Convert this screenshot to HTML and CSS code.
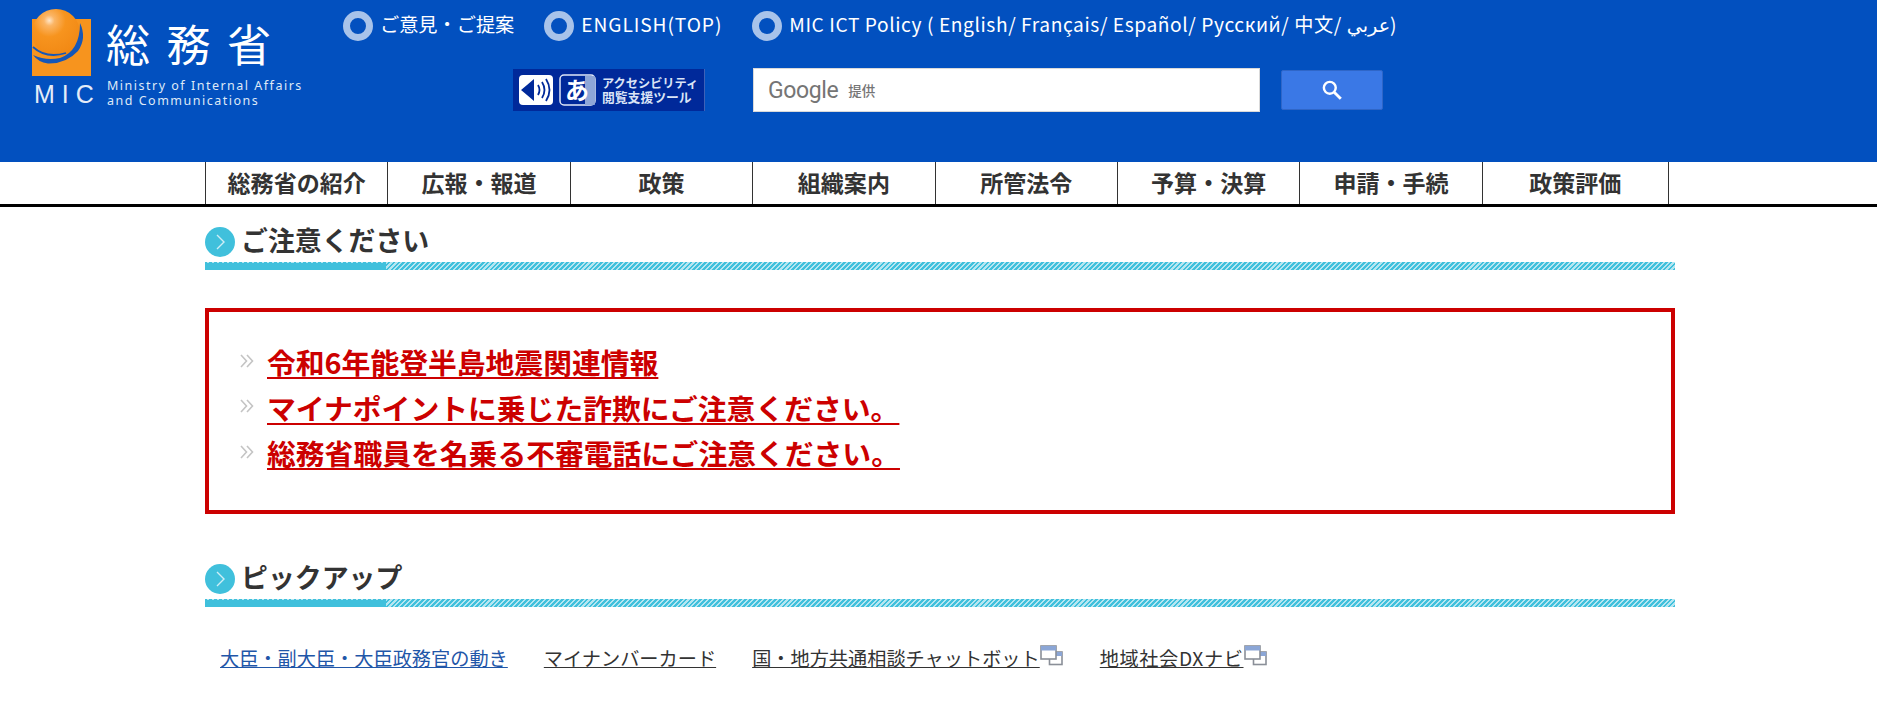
FILE: index.html
```html
<!DOCTYPE html>
<html lang="ja">
<head>
<meta charset="utf-8">
<title>総務省</title>
<link rel="stylesheet" href="styles.css">
</head>
<body>
<svg class="defs" width="0" height="0" aria-hidden="true">
  <defs>
    <radialGradient id="ball" cx="0.36" cy="0.24" r="0.85">
      <stop offset="0" stop-color="#ffe6c8"/>
      <stop offset="0.13" stop-color="#fbb565"/>
      <stop offset="0.4" stop-color="#f7941e"/>
      <stop offset="1" stop-color="#f08612"/>
    </radialGradient>
    <symbol id="ring" viewBox="0 0 30 30">
      <circle cx="15" cy="15" r="11.5" fill="none" stroke="#a8c3ea" stroke-width="7"/>
    </symbol>
    <symbol id="chev" viewBox="0 0 14 14">
      <path d="M1 1l5.5 6L1 13M7 1l5.5 6L7 13" fill="none" stroke="#c4c4c4" stroke-width="1.6"/>
    </symbol>
    <symbol id="win" viewBox="0 0 23 21">
      <rect x="9.5" y="7" width="12.5" height="12.5" fill="#fff" stroke="#8a8f98" stroke-width="1.6"/>
      <rect x="9.5" y="7" width="12.5" height="4" fill="#8ba6d6"/>
      <rect x="1" y="1" width="15" height="13" fill="#fff" stroke="#8a8f98" stroke-width="1.6"/>
      <rect x="1" y="1" width="15" height="4.5" fill="#8ba6d6"/>
    </symbol>
    <symbol id="arrow" viewBox="0 0 30 30">
      <circle cx="15" cy="15" r="15" fill="#40c0dc"/>
      <path d="M12 8l7 7-7 7" fill="none" stroke="#cfeef6" stroke-width="1.4"/>
    </symbol>
  </defs>
</svg>

<header class="masthead">
  <a class="logo" href="#">
    <svg width="343" height="120" viewBox="0 0 343 120">
      <rect x="32" y="19" width="59" height="57" fill="#f7941e"/>
      <circle cx="56" cy="33" r="24" fill="url(#ball)"/>
      <path d="M80 23Q87 38 78 51Q66 64 48 63.500Q38 62 33 55Q46 61 60 58Q80 51 80 23z" fill="#1557b8"/>
      <path d="M33 47Q46 59 66 53" fill="none" stroke="#1557b8" stroke-width="1.800"/>
      <text class="logo-kanji" x="106" y="62">総務省</text>
      <text class="logo-mic" x="34" y="103">MIC</text>
      <text class="logo-en" x="107" y="90">Ministry of Internal Affairs</text>
      <text class="logo-en" x="107" y="105">and Communications</text>
    </svg>
  </a>
  <div class="head-main">
    <ul class="toplinks">
      <li><svg class="ring"><use href="#ring"/></svg><a href="#">ご意見・ご提案</a></li>
      <li><svg class="ring"><use href="#ring"/></svg><a class="en-a" href="#">ENGLISH(TOP)</a></li>
      <li><svg class="ring"><use href="#ring"/></svg><a class="en-b" href="#">MIC ICT Policy ( English/ Français/ Español/ Русский/ 中文/ عربي)</a></li>
    </ul>
    <div class="tools">
      <a class="a11y" href="#">
        <svg width="192" height="42" viewBox="0 0 192 42">
          <rect width="192" height="42" fill="#00299a"/>
          <rect x="191" width="1" height="42" fill="#3e62b8"/>
          <rect x="6" y="6" width="34" height="30" rx="4" fill="#fff"/>
          <path d="M8 21L14 16L21 10V32L14 26z" fill="#00299a"/>
          <path d="M25 16q3 5 0 10M29 13q5 8 0 16M33 10q7 11 0 22" fill="none" stroke="#00299a" stroke-width="1.800"/>
          <rect x="47" y="6" width="35" height="30" rx="4" fill="#00299a" stroke="#dfe7f7" stroke-width="1.500"/>
          <path d="M72 7h9a1 1 0 0 1 1 1v27a1 1 0 0 1-1 1h-9z" fill="#8ea6d8"/>
          <text class="a11y-kana" x="52" y="30">あ</text>
          <text class="a11y-txt a11y-one" x="89" y="19">アクセシビリティ</text>
          <text class="a11y-txt a11y-two" x="89" y="33">閲覧支援ツール</text>
        </svg>
      </a>
      <form class="search">
        <div class="search-box"><span class="g-brand">Google</span><span class="g-note">提供</span></div>
        <button class="search-btn" type="button" aria-label="検索">
          <svg width="22" height="22" viewBox="0 0 20 20"><circle cx="8" cy="8" r="5.400" fill="none" stroke="#fff" stroke-width="2.200"/><path d="M12 12l6 6" stroke="#fff" stroke-width="2.600"/></svg>
        </button>
      </form>
    </div>
  </div>
</header>

<nav class="gnav">
  <ul>
    <li><a href="#">総務省の紹介</a></li>
    <li><a href="#">広報・報道</a></li>
    <li><a href="#">政策</a></li>
    <li><a href="#">組織案内</a></li>
    <li><a href="#">所管法令</a></li>
    <li><a href="#">予算・決算</a></li>
    <li><a href="#">申請・手続</a></li>
    <li><a href="#">政策評価</a></li>
  </ul>
</nav>

<main class="content">
  <section class="notice">
    <h2 class="sec-title"><svg class="arrow"><use href="#arrow"/></svg><span>ご注意ください</span></h2>
    <div class="sec-bar"></div>
    <ul class="alert">
      <li><svg class="chev"><use href="#chev"/></svg><a href="#">令和6年能登半島地震関連情報</a></li>
      <li><svg class="chev"><use href="#chev"/></svg><a href="#">マイナポイントに乗じた詐欺にご注意ください。</a></li>
      <li><svg class="chev"><use href="#chev"/></svg><a href="#">総務省職員を名乗る不審電話にご注意ください。</a></li>
    </ul>
  </section>
  <section class="pickup">
    <h2 class="sec-title"><svg class="arrow"><use href="#arrow"/></svg><span>ピックアップ</span></h2>
    <div class="sec-bar"></div>
    <ul class="pick-links">
      <li><a class="blue" href="#">大臣・副大臣・大臣政務官の動き</a></li>
      <li><a href="#">マイナンバーカード</a></li>
      <li><a href="#">国・地方共通相談チャットボット</a><svg class="win"><use href="#win"/></svg></li>
      <li><a class="dx" href="#">地域社会DXナビ</a><svg class="win"><use href="#win"/></svg></li>
    </ul>
  </section>
</main>
</body>
</html>
```
FILE: styles.css
```css
* { box-sizing: border-box; }
html, body { margin: 0; padding: 0; height: 708px; overflow: hidden; background: #fff; }
body { font-family: "Noto Sans CJK JP", "Noto Sans", "DejaVu Sans", sans-serif; font-size: 19.2px; color: #333; }
ul { list-style: none; margin: 0; padding: 0; }
.defs { position: absolute; }
svg { display: block; }

.masthead { display: flex; height: 162px; background: #0250bf; color: #fff; }
.logo { flex: none; width: 343px; height: 120px; }
.logo-kanji { font-size: 44px; fill: #fff; letter-spacing: 16.500px; font-weight: 400; }
.logo-mic { font-size: 25px; fill: #e4ecf8; letter-spacing: 7px; font-family: "Liberation Sans", sans-serif; }
.logo-en { font-size: 12.500px; fill: #dfe9f7; letter-spacing: 1.500px; font-family: "Noto Sans", sans-serif; }

.head-main { flex: 1; padding-top: 11px; }
.toplinks { display: flex; height: 30px; align-items: center; }
.toplinks li { display: flex; align-items: center; margin-right: 30px; }
.toplinks .ring { width: 30px; height: 30px; margin-right: 7px; flex: none; }
.toplinks a { color: #fff; text-decoration: none; white-space: nowrap; font-size: 19.2px; line-height: 30px; padding-bottom: 4px; }
.toplinks a.en-a { letter-spacing: 0.900px; }
.toplinks a.en-b { letter-spacing: 0.570px; }

.tools { display: flex; align-items: center; margin-top: 27px; padding-left: 170px; }
.a11y { flex: none; width: 192px; height: 42px; margin-right: 48px; }
.a11y-kana { font-size: 24px; fill: #fff; font-weight: 700; }
.a11y-txt { fill: #dbe4f6; font-weight: 700; }
.a11y-one { font-size: 12.200px; }
.a11y-two { font-size: 12.800px; }

.search { display: flex; align-items: center; }
.search-box { display: flex; align-items: center; width: 507px; height: 44px; padding-left: 14px; background: #fff; border: 1px solid #d9d9d9; }
.g-brand { font-family: "Roboto", sans-serif; font-size: 23px; color: #757575; letter-spacing: -0.400px; }
.g-note { font-size: 13.500px; color: #757575; margin-left: 10px; font-weight: 500; }
.search-btn { display: flex; align-items: center; justify-content: center; width: 102px; height: 40px; margin-left: 21px; padding: 0; background: #3a78e6; border: 1px solid #2f66c8; border-radius: 2px; }

.gnav { height: 45px; border-bottom: 3px solid #000; padding-left: 205px; }
.gnav ul { display: flex; height: 42px; }
.gnav li { width: 182.4px; border-left: 1px solid #333; text-align: center; }
.gnav li:last-child { width: 187px; border-right: 1px solid #333; }
.gnav a { display: block; font-size: 23.04px; font-weight: 700; line-height: 40px; color: #333; text-decoration: none; white-space: nowrap; }

.content { width: 1470px; margin-left: 205px; padding-top: 20px; }
.sec-title { display: flex; align-items: center; gap: 6px; height: 30px; margin: 0; font-size: 26.88px; font-weight: 700; line-height: 30px; color: #333; }
.sec-title span { padding-bottom: 4px; }
.arrow { width: 30px; height: 30px; flex: none; }
.sec-bar { position: relative; height: 8px; margin-top: 5px; background: repeating-linear-gradient(135deg, #40c0dc 0 2px, #b5e6f1 2px 3.500px); }
.sec-bar::before { content: ""; position: absolute; left: 0; top: 1px; bottom: 0; width: 181px; background: #40c0dc; }

.alert { height: 206px; margin-top: 38px; padding: 27px 0 0 31px; border: 4px solid #cc0000; }
.alert li { display: flex; align-items: center; height: 45.6px; }
.chev { width: 14px; height: 14px; margin: 0 13px 2px 0; flex: none; }
.alert a { font-size: 28.8px; font-weight: 700; line-height: 45.6px; color: #cc0000; white-space: nowrap; text-decoration-thickness: 2px; text-underline-offset: 3px; }

.pickup { margin-top: 50px; }
.pick-links { display: flex; margin-top: 37px; padding-left: 15px; }
.pick-links li { display: flex; margin-right: 36px; }
.pick-links a { font-size: 19.2px; line-height: 28px; color: #333; text-decoration: underline; white-space: nowrap; }
.pick-links a.blue { color: #1f56a8; }
.pick-links a.dx { letter-spacing: 0.600px; }
.win { width: 23px; height: 21px; flex: none; margin: 1px 1px 0 0; }
```
